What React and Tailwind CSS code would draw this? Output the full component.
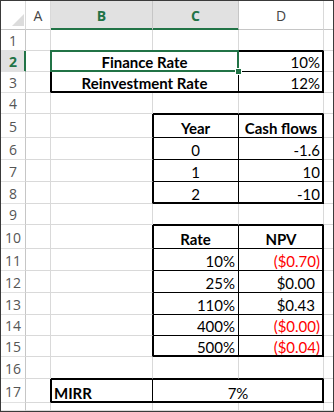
const cellFont = "font-['Lato','Liberation_Sans',sans-serif] text-[15px] leading-[18px] text-black"
const headFont = "font-['Open_Sans','Noto_Sans',sans-serif] text-[14px] leading-[17px]"

const W = {
  a: 'w-[25px]',
  b: 'w-[102px]',
  c: 'w-[86px]',
  d: 'w-[85px]',
  e: 'w-[9px]',
  bc: 'w-[188px]',
  cd: 'w-[171px]',
}

const SH = {
  l: 'shadow-[inset_1px_0_0_0_#000]',
  lb: 'shadow-[inset_1px_-1px_0_0_#000]',
  r: 'shadow-[inset_-1px_0_0_0_#000]',
  rb: 'shadow-[inset_-1px_-1px_0_0_#000]',
  lt: 'shadow-[inset_1px_1px_0_0_#000]',
  rt: 'shadow-[inset_-1px_1px_0_0_#000]',
  ltb: 'shadow-[inset_1px_1px_0_0_#000,inset_0_-1px_0_0_#000]',
  rtb: 'shadow-[inset_-1px_1px_0_0_#000,inset_0_-1px_0_0_#000]',
}

function Cell({ w, r, b, sh = '', align = 'c', bold, red, pad, last, className = '', extra, children }) {
  const al = align === 'l' ? 'justify-start pl-[3px]' : align === 'r' ? 'justify-end pr-[3px]' : 'justify-center'
  return (
    <div
      className={`box-border flex shrink-0 items-end whitespace-nowrap border-b bg-white ${last ? 'flex-1 border-r-0' : 'border-r'} ${r ? 'border-r-black' : 'border-r-[#d9d9d9]'} ${b ? 'border-b-black' : 'border-b-[#d9d9d9]'} ${w} ${al} ${sh} ${className}`}
    >
      {children !== undefined && (
        <span className={`${bold ? 'font-bold' : ''} ${red ? 'text-[#ff0000]' : ''} ${pad ? 'mr-[5px]' : ''}`}>
          {children}
        </span>
      )}
      {extra}
    </div>
  )
}

function RowHead({ n, selected }) {
  return (
    <div
      className={`box-border flex w-[25px] shrink-0 items-center justify-center overflow-hidden border-r border-b border-b-[#e1e1e1] pt-px ${headFont} ${
        selected
          ? 'border-r-[#217346] bg-[#e1e1e1] font-bold text-[#217346] shadow-[inset_-1px_0_0_0_#217346]'
          : 'border-r-[#c6c6c6] bg-white text-[#555]'
      }`}
    >
      {n}
    </div>
  )
}

function Row({ h, children }) {
  return <div className={`flex ${h}`}>{children}</div>
}

const yearRows = [
  ['0', '-1.6'],
  ['1', '10'],
  ['2', '-10'],
]

const npvRows = [
  ['10%', '($0.70)', true, 'h-[22px]'],
  ['25%', '$0.00', false, 'h-[22px]'],
  ['110%', '$0.43', false, 'h-[22px]'],
  ['400%', '($0.00)', true, 'h-[21px]'],
  ['500%', '($0.04)', true, 'h-[21px]'],
]

export default function App() {
  return (
    <div className={`box-border h-[412px] w-[334px] overflow-hidden border border-[#3a3a3a] bg-white ${cellFont}`}>
      {/* column headers */}
      <div className={`flex h-[29px] ${headFont}`}>
        <div className="box-border flex w-[25px] shrink-0 items-end justify-end border-r border-b border-r-[#d9d9d9] border-b-[#c6c6c6] pr-px pb-[3px]">
          <svg width="12" height="12" viewBox="0 0 12 12">
            <polygon points="12,0 12,12 0,12" fill="#dcdcdc" />
          </svg>
        </div>
        <div className="box-border flex w-[25px] shrink-0 items-end justify-center border-r border-b border-r-[#d9d9d9] border-b-[#c6c6c6] pb-[5px] text-[#444]">A</div>
        <div className="box-border flex w-[102px] shrink-0 items-end justify-center border-r border-b border-r-[#c6c6c6] border-b-[#217346] bg-[#e1e1e1] pb-[5px] font-bold text-[#217346] shadow-[inset_0_-1px_0_0_#217346]">B</div>
        <div className="box-border flex w-[86px] shrink-0 items-end justify-center border-r border-b border-r-[#c6c6c6] border-b-[#217346] bg-[#e1e1e1] pb-[5px] font-bold text-[#217346] shadow-[inset_0_-1px_0_0_#217346]">C</div>
        <div className="box-border flex w-[85px] shrink-0 items-end justify-center border-r border-b border-r-[#d9d9d9] border-b-[#c6c6c6] pb-[5px] text-[#444]">D</div>
        <div className="box-border flex-1 border-b border-b-[#c6c6c6]" />
      </div>

      <Row h="h-[21px]">
        <RowHead n="1" />
        <Cell w={W.a} />
        <Cell w={W.b} />
        <Cell w={W.c} />
        <Cell w={W.d} b />
        <Cell w={W.e} last />
      </Row>

      <Row h="h-[21px]">
        <RowHead n="2" selected />
        <Cell w={W.a} r />
        <Cell
          w={W.bc}
          r
          b
          bold
          className="relative"
          extra={
            <>
              <div className="absolute -inset-px z-10 border-2 border-[#217346]" />
              <div className="absolute -right-[4px] -bottom-[4px] z-10 h-[7px] w-[7px] border border-white bg-[#217346]" />
            </>
          }
        >
          Finance Rate
        </Cell>
        <Cell w={W.d} r b sh={SH.rt} align="r">10%</Cell>
        <Cell w={W.e} last />
      </Row>

      <Row h="h-[21px]">
        <RowHead n="3" />
        <Cell w={W.a} r />
        <Cell w={W.bc} r b sh={SH.lb} bold>Reinvestment Rate</Cell>
        <Cell w={W.d} r b sh={SH.rb} align="r">12%</Cell>
        <Cell w={W.e} last />
      </Row>

      <Row h="h-[21px]">
        <RowHead n="4" />
        <Cell w={W.a} />
        <Cell w={W.b} />
        <Cell w={W.c} b />
        <Cell w={W.d} b />
        <Cell w={W.e} last />
      </Row>

      <Row h="h-[24px]">
        <RowHead n="5" />
        <Cell w={W.a} />
        <Cell w={W.b} r />
        <Cell w={W.c} r b sh={SH.lt} bold>Year</Cell>
        <Cell w={W.d} r b sh={SH.rt} bold>Cash flows</Cell>
        <Cell w={W.e} last />
      </Row>

      {yearRows.map(([y, cf], i) => (
        <Row key={y} h="h-[22px]">
          <RowHead n={String(6 + i)} />
          <Cell w={W.a} />
          <Cell w={W.b} r />
          <Cell w={W.c} r b sh={i === 2 ? SH.lb : SH.l}>{y}</Cell>
          <Cell w={W.d} r b sh={i === 2 ? SH.rb : SH.r} align="r">{cf}</Cell>
          <Cell w={W.e} last />
        </Row>
      ))}

      <Row h="h-[21px]">
        <RowHead n="9" />
        <Cell w={W.a} />
        <Cell w={W.b} />
        <Cell w={W.c} b />
        <Cell w={W.d} b />
        <Cell w={W.e} last />
      </Row>

      <Row h="h-[24px]">
        <RowHead n="10" />
        <Cell w={W.a} />
        <Cell w={W.b} r />
        <Cell w={W.c} r b sh={SH.lt} bold>Rate</Cell>
        <Cell w={W.d} r b sh={SH.rt} bold>NPV</Cell>
        <Cell w={W.e} last />
      </Row>

      {npvRows.map(([rate, npv, neg, h], i) => (
        <Row key={rate} h={h}>
          <RowHead n={String(11 + i)} />
          <Cell w={W.a} />
          <Cell w={W.b} r />
          <Cell w={W.c} r b sh={i === 4 ? SH.lb : SH.l} align="r">{rate}</Cell>
          <Cell w={W.d} r b sh={i === 4 ? SH.rb : SH.r} align="r" red={neg} pad={!neg}>
            {npv}
          </Cell>
          <Cell w={W.e} last />
        </Row>
      ))}

      <Row h="h-[22px]">
        <RowHead n="16" />
        <Cell w={W.a} />
        <Cell w={W.b} b />
        <Cell w={W.c} b />
        <Cell w={W.d} b />
        <Cell w={W.e} last />
      </Row>

      <Row h="h-[24px]">
        <RowHead n="17" />
        <Cell w={W.a} r />
        <Cell w={W.b} r b sh={SH.ltb} align="l" bold>MIRR</Cell>
        <Cell w={W.cd} r b sh={SH.rtb}>7%</Cell>
        <Cell w={W.e} last />
      </Row>

      <Row h="h-[8px]">
        <RowHead n="" />
        <Cell w={W.a} />
        <Cell w={W.b} />
        <Cell w={W.c} />
        <Cell w={W.d} />
        <Cell w={W.e} last />
      </Row>
    </div>
  )
}
